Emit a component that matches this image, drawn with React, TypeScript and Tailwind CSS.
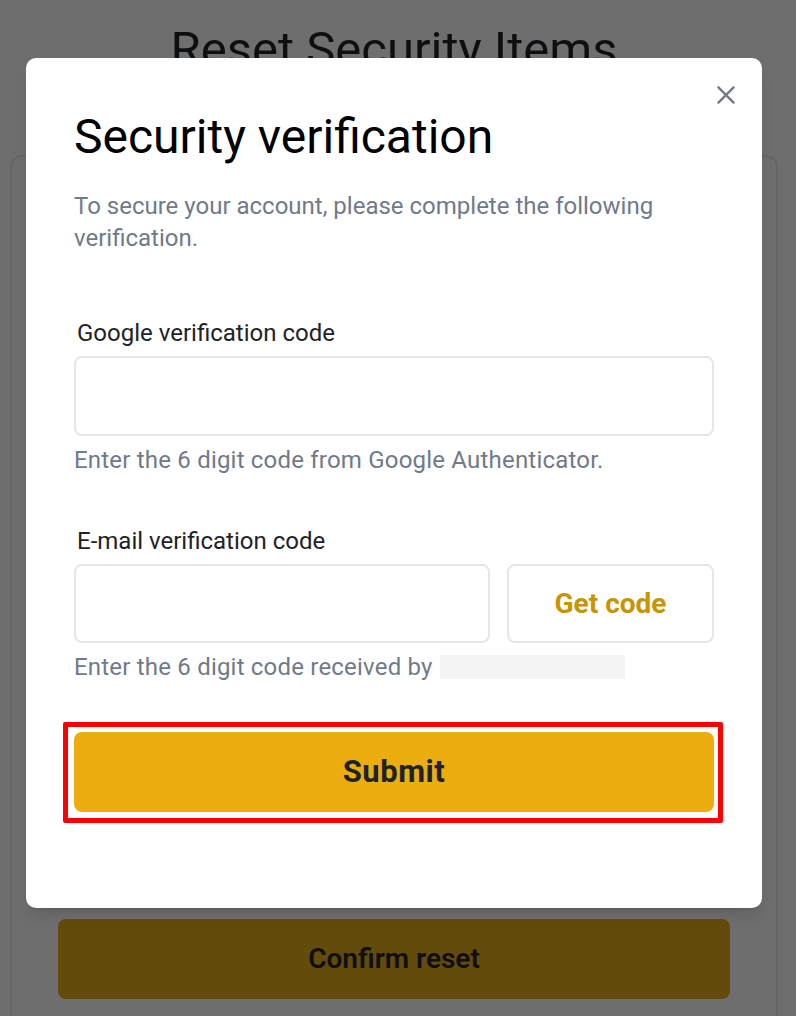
import React from 'react';

const FONT = { fontFamily: 'Roboto, "Noto Sans", Arial, sans-serif' };

function CloseIcon() {
  return (
    <svg width="26" height="26" viewBox="0 0 24 24" fill="none" stroke="#707a8a" strokeWidth={2.2} strokeLinecap="round">
      <path d="M5 5l14 14M19 5L5 19" />
    </svg>
  );
}

function Field({ label, hint, children }: { label: string; hint: React.ReactNode; children: React.ReactNode }) {
  return (
    <div>
      <label className="block px-[3px] text-[24px] leading-[30px] text-[#1e2329]">{label}</label>
      <div className="mt-[8px]">{children}</div>
      <p className="mt-[9px] text-[24px] leading-[30px] tracking-[0.2px] text-[#707a8a]">{hint}</p>
    </div>
  );
}

export default function App() {
  return (
    <div className="relative h-[1016px] w-[796px] overflow-hidden bg-white" style={FONT}>
      {/* page under the dialog */}
      <div className="flex w-[788px] flex-col items-center pt-[20px]">
        <h1 className="text-[49px] leading-[60px] text-[#1e2329]">Reset Security Items</h1>
        <div className="mt-[75px] h-[900px] w-[768px] rounded-[12px] border-2 border-[#eaecef]">
          <div className="h-[762px]" />
          <button className="mx-auto block h-[80px] w-[672px] rounded-[8px] bg-[#e6ae1c] text-[28px] font-semibold text-[#1e2329]">
            Confirm reset
          </button>
        </div>
      </div>

      {/* overlay */}
      <div className="absolute inset-0 bg-black/[0.57]">
        <div className="relative ml-[26px] mt-[58px] h-[850px] w-[736px] rounded-[10px] bg-white px-[48px] pt-[53px] shadow-lg">
          <button className="absolute right-[23px] top-[24px]">
            <CloseIcon />
          </button>
          <h2 className="text-[48px] leading-[52px] text-black">Security verification</h2>
          <p className="mt-[27px] text-[24px] leading-[32px] text-[#707a8a]">
            To secure your account, please complete the following verification.
          </p>

          <div className="mt-[64px]">
            <Field label="Google verification code" hint="Enter the 6 digit code from Google Authenticator.">
              <div className="h-[80px] rounded-[8px] border-2 border-[#e6e6e6]" />
            </Field>
          </div>

          <div className="mt-[51px]">
            <Field
              label="E-mail verification code"
              hint={
                <span className="flex items-center">
                  Enter the 6 digit code received by
                  <span className="ml-[7px] inline-block h-[24px] w-[185px] bg-[#f4f4f4]" />
                </span>
              }
            >
              <div className="flex gap-[17px]">
                <div className="h-[79px] flex-1 rounded-[8px] border-2 border-[#e6e6e6]" />
                <button className="h-[79px] w-[207px] rounded-[8px] border-2 border-[#e6e6e6] text-[28px] font-bold text-[#c99400]">
                  Get code
                </button>
              </div>
            </Field>
          </div>

          <div className="relative mt-[50px]">
            <div className="absolute -bottom-[11px] -left-[11px] -right-[9px] -top-[10px] rounded-[2px] border-[5px] border-[#ff0000]" />
            <button className="relative h-[80px] w-full rounded-[8px] bg-[#ecad0f] text-[31px] font-bold tracking-[0.5px] text-[#1e2329]">
              Submit
            </button>
          </div>
        </div>
      </div>
    </div>
  );
}
